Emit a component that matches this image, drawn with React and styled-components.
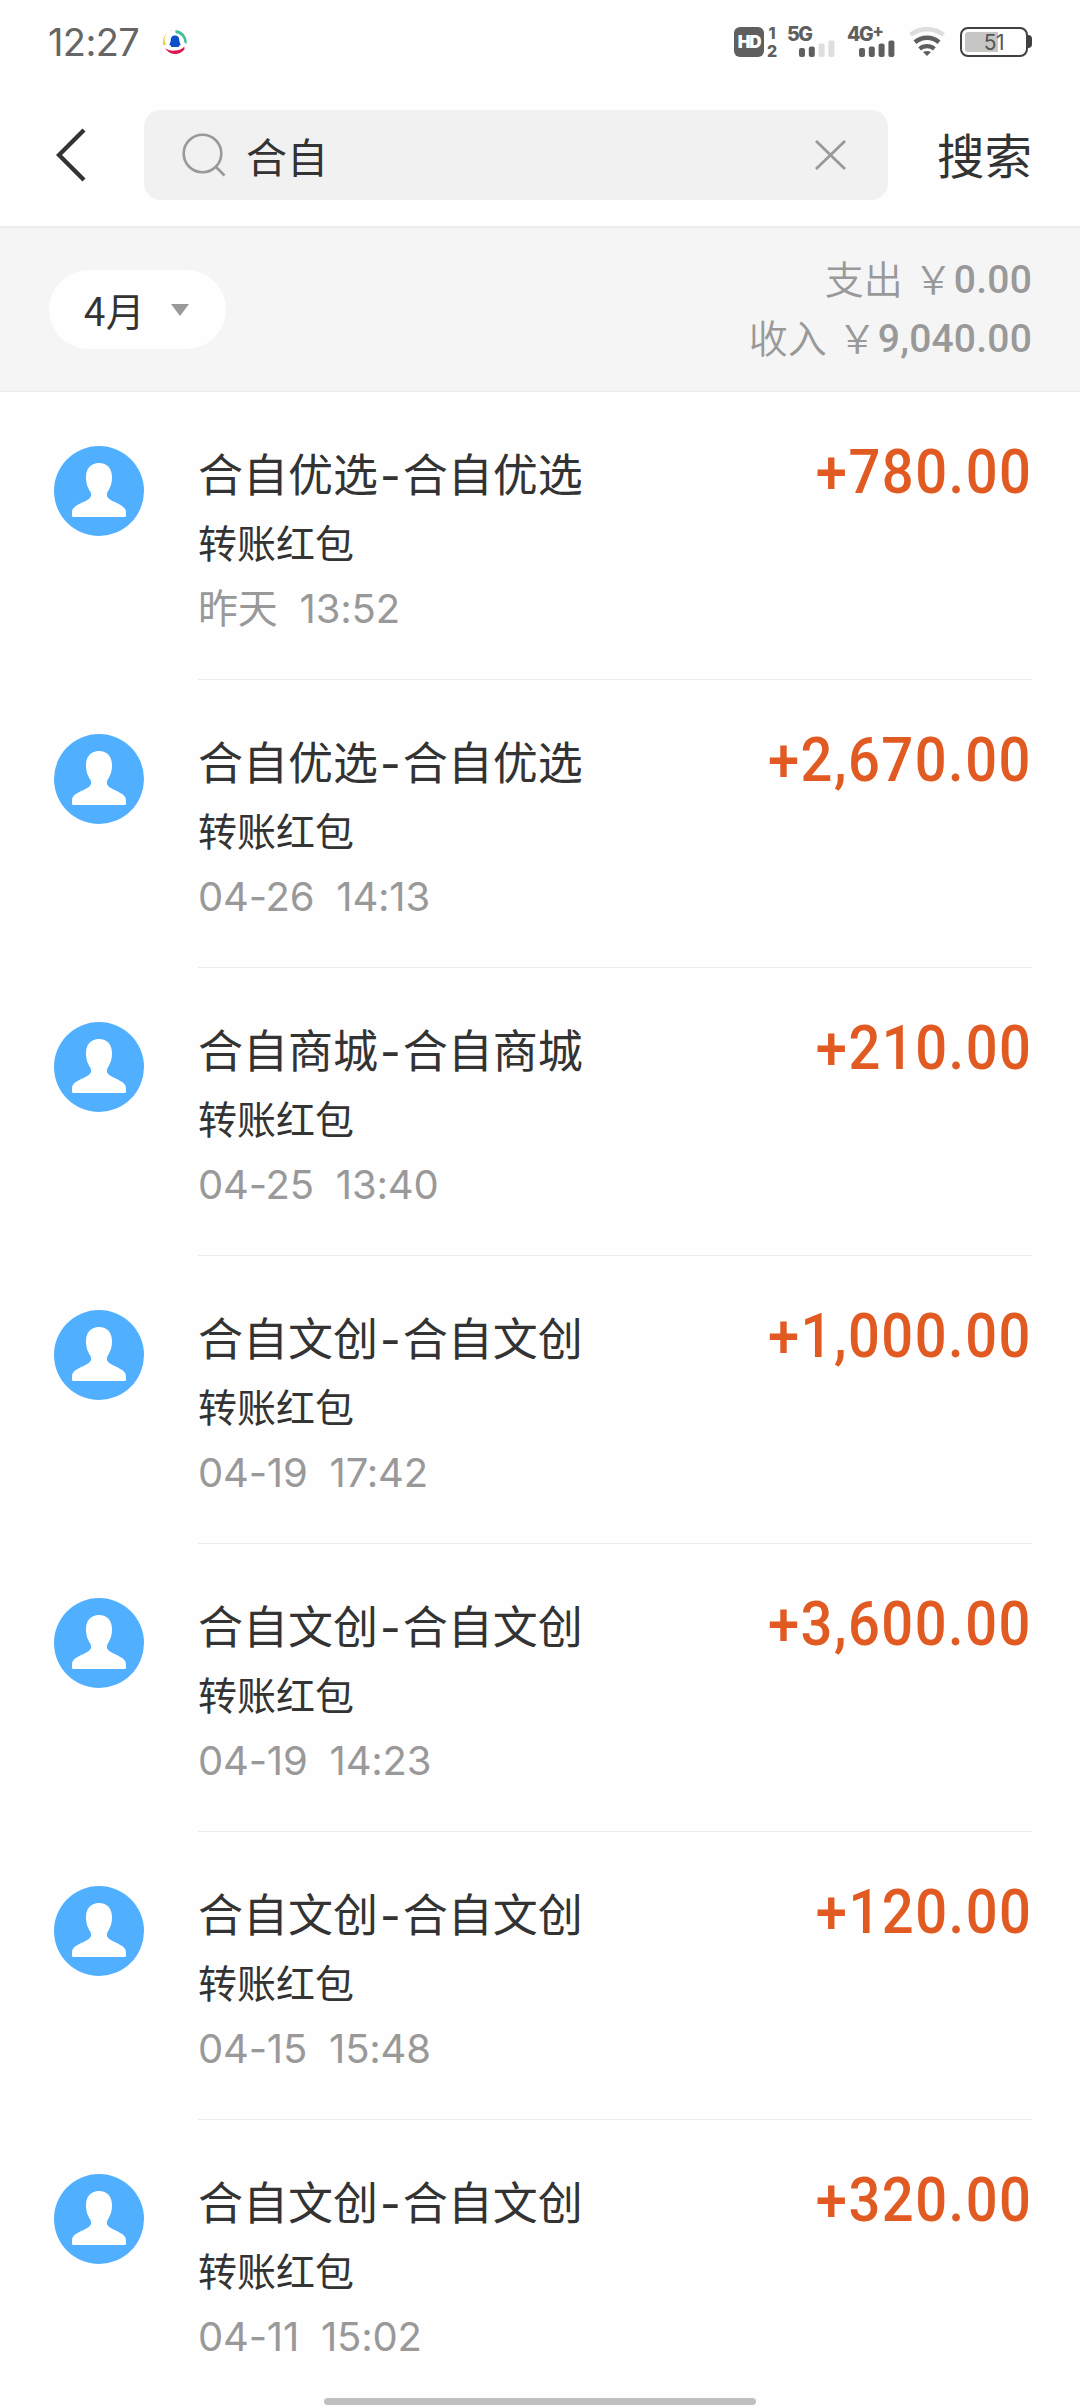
import React from 'react';
import styled, { createGlobalStyle } from 'styled-components';

const records = [
  { id: 1, name: '合自优选', date: '昨天', time: '13:52', amount: '+780.00' },
  { id: 2, name: '合自优选', date: '04-26', time: '14:13', amount: '+2,670.00' },
  { id: 3, name: '合自商城', date: '04-25', time: '13:40', amount: '+210.00' },
  { id: 4, name: '合自文创', date: '04-19', time: '17:42', amount: '+1,000.00' },
  { id: 5, name: '合自文创', date: '04-19', time: '14:23', amount: '+3,600.00' },
  { id: 6, name: '合自文创', date: '04-15', time: '15:48', amount: '+120.00' },
  { id: 7, name: '合自文创', date: '04-11', time: '15:02', amount: '+320.00' },
];

const NoticeIcon = () => (
  <svg width="26" height="26" viewBox="0 0 26 26">
    <path d="M12 1A12 12 0 0 0 1.4 16.6L4.2 15.6A9.4 9.4 0 0 1 12 1Z" fill="#e6d63c" />
    <path d="M13.5 1A12 12 0 0 1 24.6 14.8L22.4 13.4A9.8 9.8 0 0 0 13.5 4Z" fill="#45bd97" />
    <path d="M3 19.3A12 12 0 0 0 22.4 20.6L22.4 17.6A12.4 12.4 0 0 1 13 21.6Q7 22.4 3 19.3Z" fill="#d9184f" />
    <path d="M13 6.6c-2.8 0-4.3 2-4.3 4.6 0 2.2-1.2 3-1.2 4.6 0 .8.6.8 1.3.4.2.9.4 1.3.4 1.8h7.6c0-.5.2-.9.4-1.8.7.4 1.3.4 1.3-.4 0-1.6-1.2-2.4-1.2-4.6 0-2.6-1.5-4.6-4.3-4.6z" fill="#0c50c8" />
  </svg>
);

const SignalBars = ({ level }) => (
  <svg width="36" height="17" viewBox="0 0 36 17">
    {[9, 10.5, 13.5, 16.5].map((h, i) => (
      <rect key={h} x={i * 9.8} y={17 - h} width="6" height={h} rx="2" fill={i < level ? '#5f5f5f' : '#dedede'} />
    ))}
  </svg>
);

const WifiIcon = () => (
  <svg width="36" height="30" viewBox="0 0 36 30" fill="none">
    <path d="M1.5 7.8A27 27 0 0 1 34.5 7.8" stroke="#dedede" strokeWidth="4.6" />
    <path d="M6 15.2A18.5 18.5 0 0 1 30 15.2" stroke="#5f5f5f" strokeWidth="4.6" />
    <path d="M10.6 21.8A11.5 11.5 0 0 1 25.4 21.8" stroke="#5f5f5f" strokeWidth="4.2" />
    <path d="M18 29L14 25Q18 22.8 22 25Z" fill="#5f5f5f" />
  </svg>
);

const BackIcon = () => (
  <svg width="30" height="54" viewBox="0 0 30 54" fill="none">
    <path d="M28 2L3 27L28 52" stroke="#333" strokeWidth="4.4" />
  </svg>
);

const SearchIcon = () => (
  <svg width="44" height="44" viewBox="0 0 44 44" fill="none" stroke="#999" strokeWidth="2.6">
    <circle cx="20.5" cy="20.5" r="18.8" />
    <path d="M34 34L42.5 42.5" />
  </svg>
);

const ClearIcon = () => (
  <svg width="31" height="30" viewBox="0 0 31 30" stroke="#999" strokeWidth="2.8">
    <path d="M1 1L30 29M30 1L1 29" />
  </svg>
);

const PersonIcon = () => (
  <svg width="90" height="90" viewBox="0 0 90 90">
    <circle cx="45" cy="45" r="45" fill="#50b0ff" />
    <path
      d="M45 17C37 17 32 22.5 32 31C32 38.5 34 42 36.5 46C38 49 37 51.5 34 53.5C29 57 18 59.5 18 66V69.5Q18 71 19.5 71H70.5Q72 71 72 69.5V66C72 59.5 61 57 56 53.5C53 51.5 52 49 53.5 46C56 42 58 38.5 58 31C58 22.5 53 17 45 17Z"
      fill="#fff"
    />
  </svg>
);

const App = () => (
  <>
    <GlobalStyle />
    <Screen>
      <StatusBar>
        <StatusTime>12:27</StatusTime>
        <NoticeIcon />
        <StatusIcons>
          <HdGroup>
            <HdBadge>HD</HdBadge>
            <SimNumbers>
              <span>1</span>
              <span>2</span>
            </SimNumbers>
          </HdGroup>
          <Network $right={12}>
            <NetworkLabel>5G</NetworkLabel>
            <SignalBars level={2} />
          </Network>
          <Network $right={14}>
            <NetworkLabel>
              4G<Plus>+</Plus>
            </NetworkLabel>
            <SignalBars level={4} />
          </Network>
          <WifiIcon />
          <Battery>
            <BatteryBody>
              <BatteryFill />
              <BatteryText>51</BatteryText>
            </BatteryBody>
            <BatteryTip />
          </Battery>
        </StatusIcons>
      </StatusBar>

      <SearchHeader>
        <BackIcon />
        <SearchBox>
          <SearchIcon />
          <SearchText>合自</SearchText>
          <ClearIcon />
        </SearchBox>
        <SearchButton>搜索</SearchButton>
      </SearchHeader>

      <Summary>
        <MonthPicker>
          <span>4月</span>
          <Caret />
        </MonthPicker>
        <Totals>
          <TotalRow>
            <TotalLabel>支出</TotalLabel>
            <Yen>￥</Yen>
            <TotalValue>0.00</TotalValue>
          </TotalRow>
          <TotalRow>
            <TotalLabel>收入</TotalLabel>
            <Yen>￥</Yen>
            <TotalValue>9,040.00</TotalValue>
          </TotalRow>
        </Totals>
      </Summary>

      <RecordList>
        {records.map((record) => (
          <Record key={record.id}>
            <PersonIcon />
            <RecordBody>
              <RecordInfo>
                <RecordTitle>
                  {record.name}
                  <Dash>-</Dash>
                  {record.name}
                </RecordTitle>
                <RecordType>转账红包</RecordType>
                <RecordTime>
                  <span>{record.date}</span>
                  <span>{record.time}</span>
                </RecordTime>
              </RecordInfo>
              <Amount>{record.amount}</Amount>
            </RecordBody>
          </Record>
        ))}
      </RecordList>
      <HomeIndicator />
    </Screen>
  </>
);

const GlobalStyle = createGlobalStyle`
  html, body {
    margin: 0;
    padding: 0;
    background: #fefefe;
  }

  * {
    box-sizing: border-box;
  }

  svg {
    display: block;
    flex-shrink: 0;
  }
`;

const Screen = styled.div`
  position: relative;
  display: flex;
  flex-direction: column;
  width: 1080px;
  height: 2408px;
  overflow: hidden;
  background: #fefefe;
  color: #333;
  font-family: 'Noto Sans CJK SC', sans-serif;
`;

const StatusBar = styled.div`
  display: flex;
  align-items: center;
  height: 84px;
  padding: 0 48px;
`;

const StatusTime = styled.div`
  width: 114px;
  color: #666;
  font-family: Inter, sans-serif;
  font-size: 38px;
  letter-spacing: -0.6px;
`;

const StatusIcons = styled.div`
  display: flex;
  align-items: center;
  margin-left: auto;
`;

const HdGroup = styled.div`
  display: flex;
  gap: 2px;
  margin-right: 9px;
`;

const HdBadge = styled.div`
  width: 30px;
  height: 30px;
  border-radius: 6px;
  background: #5f5f5f;
  color: #fff;
  font: 900 17px/31px Inter, sans-serif;
  letter-spacing: -1.2px;
  text-align: center;
`;

const SimNumbers = styled.div`
  display: flex;
  flex-direction: column;
  justify-content: space-between;
  width: 12px;
  height: 30px;
  color: #5f5f5f;
  font: 800 16px/12px Inter, sans-serif;
  text-align: center;
`;

const Network = styled.div`
  display: flex;
  flex-direction: column;
  align-items: flex-end;
  width: 48px;
  height: 30px;
  margin-right: ${(props) => props.$right}px;
`;

const NetworkLabel = styled.div`
  display: flex;
  align-self: flex-start;
  height: 13px;
  color: #5f5f5f;
  font: 800 19.5px/15px Inter, sans-serif;
  letter-spacing: -1.4px;
  white-space: nowrap;
`;

const Plus = styled.span`
  font-size: 17px;
  line-height: 8px;
`;

const Battery = styled.div`
  display: flex;
  align-items: center;
  margin-left: 15px;
`;

const BatteryBody = styled.div`
  position: relative;
  width: 68px;
  height: 30px;
  padding: 3px;
  border: 2px solid #404040;
  border-radius: 8px;
`;

const BatteryFill = styled.div`
  width: 33px;
  height: 20px;
  border-radius: 3px 0 0 3px;
  background: #c6c6c4;
`;

const BatteryText = styled.div`
  position: absolute;
  inset: 0;
  color: #555;
  font: 400 21px/27px Inter, sans-serif;
  letter-spacing: -0.5px;
  text-align: center;
`;

const BatteryTip = styled.div`
  width: 4px;
  height: 13px;
  border-radius: 0 4px 4px 0;
  background: #404040;
`;

const SearchHeader = styled.div`
  display: flex;
  align-items: center;
  height: 145px;
  padding: 0 48px 0 56px;
  border-bottom: 2px solid #ebebeb;
`;

const SearchBox = styled.div`
  display: flex;
  align-items: center;
  width: 744px;
  height: 90px;
  margin-left: 58px;
  padding: 0 42px 0 38px;
  border-radius: 17px;
  background: #f1f1f1;
`;

const SearchText = styled.div`
  flex: 1;
  margin-left: 20px;
  font-size: 41px;
`;

const SearchButton = styled.div`
  margin-left: auto;
  padding-bottom: 4px;
  font-size: 47.5px;
  white-space: nowrap;
`;

const Summary = styled.div`
  display: flex;
  align-items: center;
  justify-content: space-between;
  height: 164px;
  padding: 0 48px 0 49px;
  border-bottom: 1px solid #ebebeb;
  background: #f5f5f5;
`;

const MonthPicker = styled.div`
  display: flex;
  align-items: center;
  justify-content: space-between;
  width: 177px;
  height: 79px;
  padding: 0 37px 0 35px;
  border-radius: 40px;
  background: #fefefe;
  font-size: 39px;

  span {
    padding-bottom: 2px;
  }
`;

const Caret = styled.div`
  border-top: 12px solid #999;
  border-right: 9.5px solid transparent;
  border-left: 9.5px solid transparent;
`;

const Totals = styled.div`
  display: flex;
  flex-direction: column;
  align-items: flex-end;
`;

const TotalRow = styled.div`
  display: flex;
  align-items: center;
  height: 59px;
  color: #999;
  font-size: 39px;
  font-weight: 350;
`;

const TotalLabel = styled.span`
  padding-bottom: 6px;
`;

const Yen = styled.span`
  margin: 0 1px 0 11px;
  padding-bottom: 6px;
`;

const TotalValue = styled.span`
  font-family: Roboto, sans-serif;
  font-weight: 500;
  letter-spacing: 0.2px;
`;

const RecordList = styled.div`
  display: flex;
  flex-direction: column;
`;

const Record = styled.div`
  display: flex;
  align-items: flex-start;
  gap: 54px;
  height: 288px;
  padding: 54px 48px 0 54px;
`;

const RecordBody = styled.div`
  display: flex;
  justify-content: space-between;
  flex: 1;
  height: 234px;
  border-bottom: 1px solid #ebebeb;

  ${Record}:last-child & {
    border-bottom: none;
  }
`;

const RecordInfo = styled.div`
  display: flex;
  flex-direction: column;
`;

const RecordTitle = styled.div`
  height: 60px;
  font-size: 45px;
  line-height: 54px;
`;

const Dash = styled.span`
  padding: 0 2px;
  font-family: Inter, sans-serif;
`;

const RecordType = styled.div`
  height: 72px;
  font-size: 39px;
  line-height: 70px;
`;

const RecordTime = styled.div`
  display: flex;
  gap: 22px;
  color: #999;
  font-family: Inter, 'Noto Sans CJK SC', sans-serif;
  font-size: 40px;
  letter-spacing: -0.2px;
  line-height: 61px;
`;

const Amount = styled.div`
  color: #e05a22;
  font-family: Roboto, sans-serif;
  font-size: 61px;
  font-weight: 500;
  letter-spacing: 1.6px;
  line-height: 52px;
  transform: scaleX(0.92);
  transform-origin: right;
`;

const HomeIndicator = styled.div`
  position: absolute;
  bottom: 3px;
  left: 324px;
  width: 432px;
  height: 7px;
  border-radius: 4px;
  background: #c0c0c0;
`;

export default App;
